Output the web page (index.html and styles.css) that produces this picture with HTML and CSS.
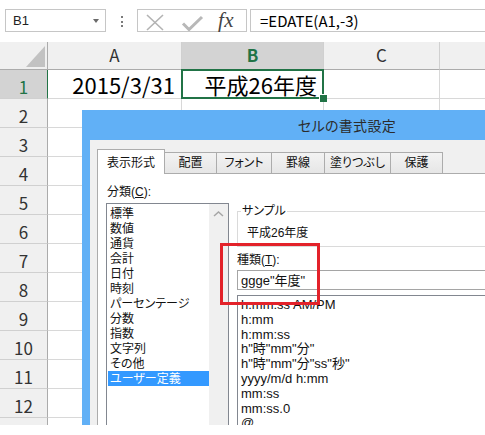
FILE: index.html
```html
<!DOCTYPE html>
<html lang="ja">
<head>
<meta charset="utf-8">
<title>セルの書式設定</title>
<link rel="stylesheet" href="styles.css">
</head>
<body>
<div class="screen">
  <div class="fbar">
    <div class="namebox"><span>B1</span><span class="nb-arrow"></span></div>
    <div class="fdots"><i></i><i></i><i></i></div>
    <div class="ficons">
      <svg class="fic" width="70" height="21" viewBox="0 0 70 21">
        <path d="M9 5 L25 20 M25 5 L9 20" stroke="#b3b3b3" stroke-width="1.6" fill="none"/>
        <path d="M45 13.5 L51 19.5 L64 7" stroke="#b8b8b8" stroke-width="3" fill="none"/>
      </svg>
      <span class="fx">fx</span>
    </div>
    <div class="finput">=EDATE(A1,-3)</div>
  </div>

  <div class="sheet">
    <div class="corner"><svg width="19" height="21" viewBox="0 0 19 21"><polygon points="19,0 19,21 0,21" fill="#c2c2c2"/></svg></div>
    <div class="ch">A</div><div class="ch sel">B</div><div class="ch">C</div><div class="ch"></div>

    <div class="rh sel">1</div><div class="cell num">2015/3/31</div><div class="cell num active">平成26年度</div><div class="cell"></div><div class="cell"></div>
    <div class="rh">2</div><div class="cell"></div><div class="cell"></div><div class="cell"></div><div class="cell"></div>
    <div class="rh">3</div><div class="cell"></div><div class="cell"></div><div class="cell"></div><div class="cell"></div>
    <div class="rh">4</div><div class="cell"></div><div class="cell"></div><div class="cell"></div><div class="cell"></div>
    <div class="rh">5</div><div class="cell"></div><div class="cell"></div><div class="cell"></div><div class="cell"></div>
    <div class="rh">6</div><div class="cell"></div><div class="cell"></div><div class="cell"></div><div class="cell"></div>
    <div class="rh">7</div><div class="cell"></div><div class="cell"></div><div class="cell"></div><div class="cell"></div>
    <div class="rh">8</div><div class="cell"></div><div class="cell"></div><div class="cell"></div><div class="cell"></div>
    <div class="rh">9</div><div class="cell"></div><div class="cell"></div><div class="cell"></div><div class="cell"></div>
    <div class="rh">10</div><div class="cell"></div><div class="cell"></div><div class="cell"></div><div class="cell"></div>
    <div class="rh">11</div><div class="cell"></div><div class="cell"></div><div class="cell"></div><div class="cell"></div>
    <div class="rh">12</div><div class="cell"></div><div class="cell"></div><div class="cell"></div><div class="cell"></div>
    <div class="rh"></div><div class="cell"></div><div class="cell"></div><div class="cell"></div><div class="cell"></div>
  </div>

  <div class="dialog">
    <div class="dlg-title">セルの書式設定</div>
    <div class="dlg-body">
      <div class="tabs">
        <div class="tab active w68">表示形式</div>
        <div class="tab w53">配置</div>
        <div class="tab w56">フォント</div>
        <div class="tab w54">罫線</div>
        <div class="tab w67">塗りつぶし</div>
        <div class="tab w53">保護</div>
      </div>
      <div class="panel">
        <div class="col-left">
          <div class="lbl">分類(<u>C</u>):</div>
          <div class="listbox">
            <ul class="items">
              <li>標準</li>
              <li>数値</li>
              <li>通貨</li>
              <li>会計</li>
              <li>日付</li>
              <li>時刻</li>
              <li>パーセンテージ</li>
              <li>分数</li>
              <li>指数</li>
              <li>文字列</li>
              <li>その他</li>
              <li class="sel">ユーザー定義</li>
            </ul>
            <div class="vscroll"><svg width="19" height="19" viewBox="0 0 19 19"><polyline points="5,12 9.5,8 14,12" fill="none" stroke="#a6a6a6" stroke-width="1.5"/></svg></div>
          </div>
        </div>
        <div class="col-right">
          <fieldset class="sample">
            <legend>サンプル</legend>
            <div>平成26年度</div>
          </fieldset>
          <div class="lbl kind">種類(<u>T</u>):</div>
          <div class="input">ggge"年度"</div>
          <ul class="typelist">
            <li>h:mm:ss AM/PM</li>
            <li>h:mm</li>
            <li>h:mm:ss</li>
            <li>h"時"mm"分"</li>
            <li>h"時"mm"分"ss"秒"</li>
            <li>yyyy/m/d h:mm</li>
            <li>mm:ss</li>
            <li>mm:ss.0</li>
            <li>@</li>
          </ul>
        </div>
      </div>
    </div>
  </div>

  <div class="callout"></div>
</div>
</body>
</html>
```

FILE: styles.css
```css
* { box-sizing: border-box; }
html, body { margin: 0; padding: 0; background: #fff; }
body {
  width: 485px;
  height: 435px;
  overflow: hidden;
  font-family: "Noto Sans CJK JP", "Noto Sans", sans-serif;
  color: #000;
}
.screen {
  position: relative;
  width: 485px;
  height: 425px;
  overflow: hidden;
  background: #fff;
}

/* ---------- formula bar ---------- */
.fbar {
  height: 42px;
  display: flex;
  align-items: flex-start;
  padding: 9px 0 0 5px;
  background: #fff;
}
.namebox {
  width: 101px;
  height: 23px;
  flex: none;
  border: 1px solid #c6c6c6;
  display: flex;
  align-items: center;
  justify-content: space-between;
  padding: 0 6px 0 7px;
  font: 13px "Liberation Sans", Arial, sans-serif;
  color: #222;
}
.nb-arrow {
  width: 0;
  height: 0;
  border-left: 3.5px solid transparent;
  border-right: 3.5px solid transparent;
  border-top: 4px solid #6a6a6a;
}
.fdots {
  width: 31px;
  flex: none;
  display: flex;
  flex-direction: column;
  align-items: center;
  gap: 2.5px;
  padding-top: 7px;
}
.fdots i {
  display: block;
  width: 2px;
  height: 2px;
  background: #7a7a7a;
}
.ficons {
  width: 110px;
  height: 23px;
  flex: none;
  border: 1px solid #c6c6c6;
  display: flex;
  align-items: flex-start;
}
.fic { display: block; }
.fx {
  margin-left: 10px;
  font: italic 21px "Liberation Serif", "DejaVu Serif", serif;
  line-height: 20px;
  color: #444;
  letter-spacing: 0.5px;
}
.finput {
  flex: 1;
  height: 23px;
  margin-left: 3px;
  border: 1px solid #c6c6c6;
  border-right: none;
  padding-left: 9px;
  font-size: 15px;
  line-height: 21px;
  color: #000;
  white-space: nowrap;
}

/* ---------- sheet ---------- */
.sheet {
  display: grid;
  width: 500px;
  grid-template-columns: 48px 134px 142px 116px 60px;
  grid-template-rows: 28px;
  grid-auto-rows: 29px;
}
.corner {
  background: #f0f0f0;
  border-right: 1px solid #ababab;
  border-bottom: 1px solid #ababab;
  display: flex;
  align-items: flex-end;
  justify-content: flex-end;
  padding: 0 2px 2px 0;
}
.corner svg { display: block; }
.ch {
  background: #f0f0f0;
  border-right: 1px solid #d0d0d0;
  border-bottom: 1px solid #ababab;
  text-align: center;
  font-size: 17px;
  line-height: 17px;
  padding-top: 4px;
  color: #333;
}
.ch.sel {
  background: #d3d3d3;
  color: #217346;
  font-weight: bold;
  border-bottom-color: #217346;
}
.rh {
  background: #f0f0f0;
  border-right: 1px solid #ababab;
  border-bottom: 1px solid #d0d0d0;
  text-align: center;
  font-size: 17px;
  line-height: 17px;
  padding-top: 8px;
  color: #333;
}
.rh.sel {
  background: #d3d3d3;
  color: #217346;
  border-right-color: #217346;
}
.cell {
  border-right: 1px solid #d8d8d8;
  border-bottom: 1px solid #d8d8d8;
  background: #fff;
}
.cell.num {
  text-align: right;
  font-size: 22px;
  line-height: 22px;
  padding: 3px 6px 0 0;
  white-space: nowrap;
}
.cell.active { position: relative; }
.cell.active::after {
  content: "";
  position: absolute;
  left: -1px;
  top: -1px;
  right: -1px;
  bottom: -1px;
  border: 2px solid #217346;
}
.cell.active::before {
  content: "";
  position: absolute;
  right: -4px;
  bottom: -4px;
  width: 7px;
  height: 7px;
  background: #217346;
  border-left: 1px solid #fff;
  border-top: 1px solid #fff;
  z-index: 1;
}

/* ---------- dialog ---------- */
.dialog {
  position: absolute;
  left: 82px;
  top: 110px;
  width: 530px;
  height: 340px;
  background: #61b0f6;
  display: flex;
  flex-direction: column;
  padding: 0 8px;
  font-feature-settings: "palt";
}
.dlg-title {
  height: 30px;
  line-height: 30px;
  text-align: center;
  font-size: 14px;
  color: #2b2b2b;
  letter-spacing: 0.3px;
}
.dlg-body {
  flex: 1;
  background: #f0f0f0;
  padding: 9px 0 0 7px;
  display: flex;
  flex-direction: column;
  font-family: "Liberation Sans", "Noto Sans CJK JP", sans-serif;
  font-size: 12px;
  color: #111;
}
.tabs {
  height: 24px;
  display: flex;
  align-items: flex-end;
}
.tab {
  height: 21px;
  border: 1px solid #acacac;
  border-bottom: none;
  background: linear-gradient(#f3f3f3, #e6e6e6);
  text-align: center;
  line-height: 19px;
  padding-top: 1px;
  margin-left: -1px;
  white-space: nowrap;
}
.tab.active {
  height: 25px;
  margin-left: 0;
  margin-bottom: -1px;
  padding-top: 4px;
  background: #fff;
  position: relative;
  z-index: 2;
}
.w68 { width: 68px; }
.w53 { width: 53px; }
.w54 { width: 54px; }
.w56 { width: 56px; }
.w67 { width: 67px; }

.panel {
  flex: 1;
  background: #fff;
  border: 1px solid #acacac;
  display: flex;
  padding: 10px 0 0 8px;
}
.lbl {
  line-height: 15px;
  padding: 1px 0 0 1px;
  white-space: nowrap;
}
.col-left {
  width: 123px;
  flex: none;
}
.listbox {
  margin-top: 3px;
  height: 260px;
  border: 1px solid #828790;
  display: flex;
}
.items {
  list-style: none;
  margin: 0;
  padding: 2px 0 0 1px;
  flex: 1;
}
.items li {
  height: 15px;
  line-height: 15px;
  padding: 1px 0 0 2px;
  white-space: nowrap;
}
.items li.sel {
  background: #3399ff;
  color: #fff;
}
.vscroll {
  width: 19px;
  flex: none;
  background: #f0f0f0;
}
.vscroll svg { display: block; }

.col-right {
  width: 300px;
  flex: none;
  margin-left: 8px;
  padding-top: 20px;
}
.sample {
  margin: 0;
  border: 1px solid #dadada;
  padding: 7px 0 5px 9px;
  line-height: 15px;
}
.sample legend {
  margin-left: -6px;
  padding: 0 1px;
  line-height: 15px;
}
.lbl.kind {
  margin-top: 5px;
  padding-left: 0;
}
.input {
  margin-top: 2px;
  height: 20px;
  border: 1px solid #a5a5a5;
  padding: 1px 0 0 3px;
  font-size: 13px;
  line-height: 17px;
  white-space: nowrap;
}
.typelist {
  list-style: none;
  margin: 5px 0 0 0;
  padding: 2px 0 0 3px;
  height: 200px;
  border: 1px solid #828790;
  font-size: 13px;
}
.typelist li {
  height: 14.8px;
  line-height: 14.8px;
  white-space: nowrap;
}

/* annotation box */
.callout {
  position: absolute;
  left: 220px;
  top: 243px;
  width: 100px;
  height: 62px;
  border: 3px solid #e3222a;
  z-index: 5;
}
```
